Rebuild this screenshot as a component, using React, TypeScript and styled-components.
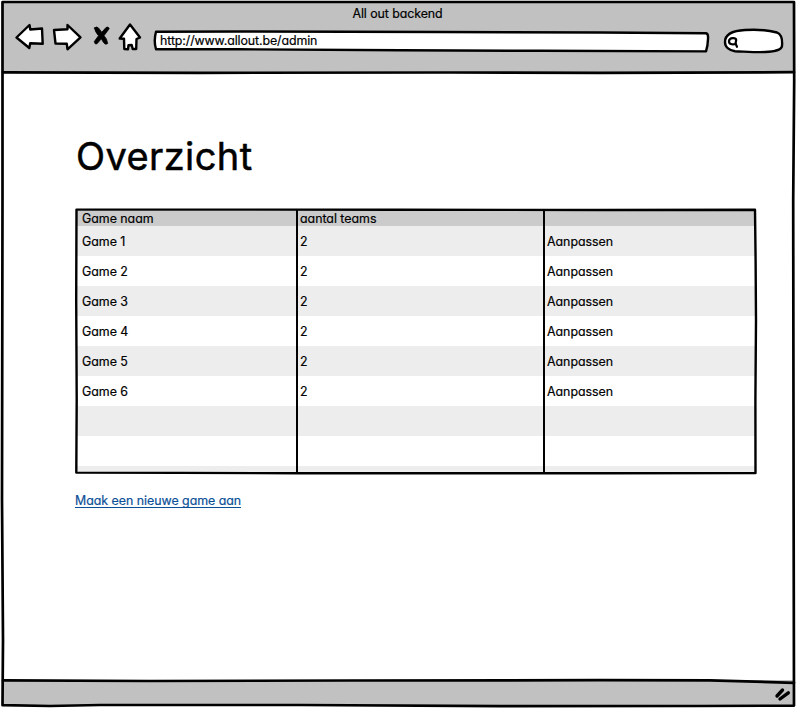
import React from 'react';
import styled, { createGlobalStyle } from 'styled-components';

const GlobalStyle = createGlobalStyle`
  *, *::before, *::after { box-sizing: border-box; }
  body {
    margin: 0;
    background: #fff;
    color: #000;
    font-family: Inter, Lato, "Liberation Sans", sans-serif;
    font-size: 12.4px;
    font-weight: 400;
    letter-spacing: -0.02px;
    font-feature-settings: "cv11" 1, "calt" 0;
    -webkit-text-stroke: 0.2px currentColor;
  }
`;

const Window = styled.div`
  position: relative;
  display: flex;
  flex-direction: column;
  width: 796px;
  height: 708px;
  padding: 2px 2px 3px 2px;
  overflow: hidden;
`;

const Outline = styled.svg`
  position: absolute;
  inset: 0;
  width: 100%;
  height: 100%;
  overflow: visible;
  pointer-events: none;
  fill: none;
  stroke: #000;
  stroke-width: 2.7;
  stroke-linejoin: round;
  stroke-linecap: round;
`;

const Chrome = styled.header`
  flex: none;
  height: 70px;
  background: #c1c1c1;
`;

const WindowTitle = styled.div`
  height: 24px;
  padding-right: 1px;
  line-height: 23px;
  text-align: center;
  letter-spacing: -0.07px;
`;

const Toolbar = styled.div`
  display: flex;
  align-items: flex-start;
  padding-left: 12px;
  height: 36px;
`;

const NavIcons = styled.div`
  display: flex;
  gap: 9px;
  width: 139px;
  margin-top: -5px;
`;

const NavIcon = styled.svg<{ $w: number }>`
  flex: none;
  width: ${(p) => p.$w}px;
  height: 32px;
  overflow: visible;
  fill: #fff;
  stroke: #000;
  stroke-width: 2.4;
  stroke-linejoin: round;
  stroke-linecap: round;
`;

const AddressBar = styled.div`
  position: relative;
  width: 555px;
  height: 20px;
  margin: 5px 0 0 0;
`;

const Address = styled.span`
  position: relative;
  display: block;
  padding-left: 7px;
  line-height: 19px;
  letter-spacing: -0.1px;
`;

const SearchBox = styled.div`
  position: relative;
  width: 60px;
  height: 24px;
  margin: 3px 0 0 15px;
`;

const Main = styled.main`
  flex: 1;
  padding: 60px 0 0 73px;
`;

const Heading = styled.h1`
  margin: 0;
  height: 77px;
  padding-left: 1px;
  line-height: 49px;
  font-size: 38px;
  font-weight: 400;
  letter-spacing: 0.4px;
  -webkit-text-stroke: 0.5px currentColor;
`;

const TableFrame = styled.div`
  position: relative;
  width: 682px;
  height: 265px;
  padding: 2px;
`;

const Row = styled.div<{ $shade: string; $h: number; $line?: number }>`
  display: grid;
  grid-template-columns: 220px 247px 1fr;
  height: ${(p) => p.$h}px;
  line-height: ${(p) => p.$line ?? p.$h}px;
  background: ${(p) => p.$shade};
`;

const Cell = styled.span<{ $first?: boolean }>`
  padding-left: ${(p) => (p.$first ? 5 : 3)}px;
  white-space: nowrap;
`;

const NewGameLink = styled.a`
  display: inline-block;
  height: 15px;
  margin-top: 19px;
  line-height: 15px;
  color: #0b4f97;
  border-bottom: 1px solid #0b4f97;
`;

const StatusBar = styled.footer`
  display: flex;
  justify-content: flex-end;
  align-items: center;
  flex: none;
  height: 25px;
  padding-right: 3px;
  background: #c1c1c1;
`;

const Grip = styled.svg`
  width: 18px;
  height: 18px;
  margin-top: 5px;
  overflow: visible;
  stroke: #000;
  stroke-width: 3.4;
  stroke-linecap: round;
`;

const games = [1, 2, 3, 4, 5, 6].map((n) => ({ name: `Game ${n}`, teams: 2 }));
const shade = (i: number) => (i % 2 === 0 ? '#ededed' : '#fff');

export default function App() {
  return (
    <>
      <GlobalStyle />
      <Window>
        <Chrome>
          <WindowTitle>All out backend</WindowTitle>
          <Toolbar>
            <NavIcons>
              <NavIcon $w={28} viewBox="14 21 28 32">
                <path d="M16.5 37.5 L29.5 25 L30.3 29.5 L42 28.5 L42.7 43.8 L30.2 43.2 L29.3 48 Z" />
              </NavIcon>
              <NavIcon $w={30} viewBox="51 21 30 32">
                <path d="M54 30 L67.5 29.3 L67.5 25 L80.5 37.3 L67.5 49.3 L66.8 43.8 L55.5 43.5 Z" />
              </NavIcon>
              <NavIcon $w={19} viewBox="90 21 19 32">
                <path
                  fill="#000"
                  strokeWidth="0.8"
                  d="M94.500 28 Q96.500 25.800 98.500 28 L101.800 32.300 L106 27.500 Q108 26.200 109.300 28.500 L104 35.700 Q107 38.500 107.700 43.500 Q105.500 45.500 103.500 42.500 L101.300 38.800 L97 43.800 Q94.800 45 94.300 41.500 L98.500 35.700 Q94.800 31.500 94.500 28 Z"
                />
              </NavIcon>
              <NavIcon $w={24} viewBox="118 21 24 32">
                <path d="M130 24.500 L140 37.500 L136.500 39 L136.200 49 L132.700 49 L131.700 45 L128.500 45.200 L128 49.300 L124.300 49 L124 38.800 L119.700 38.500 Z" />
              </NavIcon>
            </NavIcons>
            <AddressBar>
              <Outline viewBox="153 31 555 20" aria-hidden="true">
                <path
                  fill="#fff"
                  strokeWidth="2.4"
                  d="M156 31.700 L240 31.500 L440 32 L600 32.500 L706 33.300 Q708.500 33.700 708 39 Q707.800 46 706 51.400 L540 50.800 L400 50.300 L240 49.300 L156 49.200 Q153.500 41 156 31.700 Z"
                />
              </Outline>
              <Address>http://www.allout.be/admin</Address>
            </AddressBar>
            <SearchBox>
              <Outline viewBox="723 29 60 24" aria-hidden="true">
                <path
                  fill="#fff"
                  strokeWidth="2.4"
                  d="M725 42 C725 33 735 30.500 745 30 C756 29.300 768 30 777 32.500 C782 34.500 782.500 40 782 46 C781.500 50 776 51.500 765 52 C757 52.500 744 51.500 735 51.200 C729 50.500 725 47 725 42 Z"
                />
                <path strokeWidth="2.2" d="M736 43.800 C732 45.300 728.700 43.800 729 41 C729.500 37.500 735.800 37.300 736.200 40 L735.500 43.500 L737 46.800" />
              </Outline>
            </SearchBox>
          </Toolbar>
        </Chrome>

        <Main>
          <Heading>Overzicht</Heading>
          <TableFrame>
            <Row $h={15} $shade="#cbcbcb">
              <Cell $first>Game naam</Cell>
              <Cell>aantal teams</Cell>
              <Cell />
            </Row>
            {games.map((game, i) => (
              <Row key={game.name} $h={30} $line={32} $shade={shade(i)}>
                <Cell $first>{game.name}</Cell>
                <Cell>{game.teams}</Cell>
                <Cell>Aanpassen</Cell>
              </Row>
            ))}
            <Row $h={30} $shade={shade(6)} />
            <Row $h={30} $shade={shade(7)} />
            <Row $h={6} $shade={shade(8)} />
            <Outline viewBox="75 209 682 265" aria-hidden="true">
              <path strokeWidth="2.4" d="M76.500 209.600 L200 209.600 L400 209.700 L600 210 L755 209.800 L755.600 260 L756 320 L755.400 400 L755.500 473 L600 473.200 L300 473.300 L180 472.900 L76.300 472.600 L76.700 400 L76.200 300 Z" />
              <path strokeWidth="2" d="M297 210 L297 472 M544 210 L544 473" />
            </Outline>
          </TableFrame>
          <NewGameLink>Maak een nieuwe game aan</NewGameLink>
        </Main>

        <StatusBar>
          <Grip viewBox="773 687 18 18" aria-hidden="true">
            <path d="M777 697 L782.500 691 M780 700 L788.300 693.800" />
          </Grip>
        </StatusBar>

        <Outline viewBox="0 0 796 708" aria-hidden="true">
          <path d="M2.500 2 L794 2 L794.200 80 L793.200 200 L793.600 500 L794 705.600 L700 706 L500 706.200 L300 705 L100 705 L50 706 L2.500 705.200 L3 640 L2 500 L2.500 200 L2.500 60 Z" />
          <path d="M3 72.300 L100 72.700 L200 72.800 L450 72.500 L600 72.800 L794 72.200" />
          <path d="M3 680.400 L150 681 L350 680.500 L600 680.200 L710 680.300 L794 682.800" />
        </Outline>
      </Window>
    </>
  );
}
